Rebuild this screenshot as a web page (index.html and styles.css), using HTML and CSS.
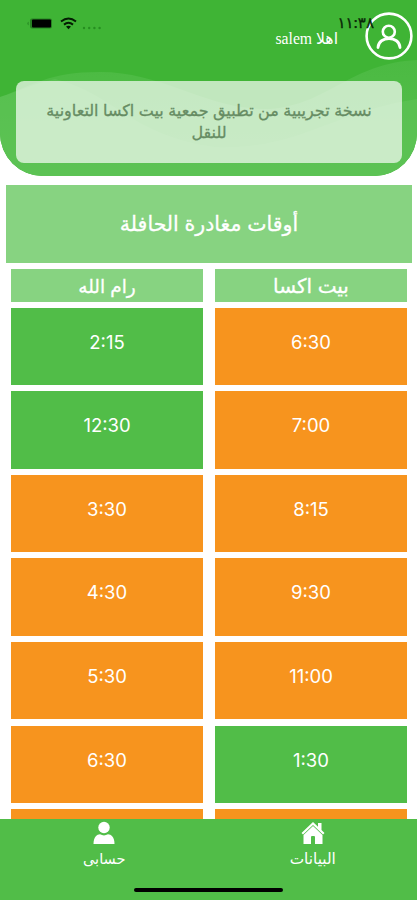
FILE: index.html
```html
<!DOCTYPE html>
<html lang="ar" dir="rtl">
<head>
<meta charset="utf-8">
<title>أوقات مغادرة الحافلة</title>
<link rel="stylesheet" href="styles.css">
</head>
<body>
<div class="app">
  <header class="header">
    <svg class="waves" viewBox="0 0 417 176" aria-hidden="true">
      <defs>
        <linearGradient id="g" x1="0" y1="0" x2="0" y2="1"><stop offset="0" stop-color="#4bba42"/><stop offset="1" stop-color="#58c04f"/></linearGradient>
      </defs>
      <path d="M0 97C32 86 48 72 100 72C165 72 205 110 270 109C330 104 350 63 417 60V176H0Z" fill="url(#g)"/>
      <path d="M0 97C20 91 32 84 55 79C115 94 130 135 215 147C300 150 330 112 417 99V176H0Z" fill="#61c55a" opacity=".55"/>
    </svg>
    <div class="topbar">
      <svg class="avatar" viewBox="0 0 48 48" fill="none" stroke="#fff" stroke-width="2.6"><circle cx="24" cy="24" r="22.4"/><circle cx="23.800" cy="19.700" r="6"/><path d="M13 35.500C13.500 23.500 34.500 23.500 35 35.500" stroke-linecap="round" stroke-width="2.800"/></svg>
      <div class="who"><span class="clock">١١:٣٨</span><span class="hello">اهلا salem</span></div>
      <svg class="status" viewBox="0 0 76 14"><rect x="3" y="1.500" width="22" height="10" rx="2" fill="#278122"/><rect x="5" y="2.500" width="19" height="8" rx="1" fill="#000"/><path d="M1.500 4.500Q-.5 6.500 1.500 8.500Z" fill="#238020"/><g fill="none" stroke="#041d03" stroke-width="2"><path d="M34 4.500Q41.500-1.500 49 4.500M37 7.600Q41.500 4 46 7.600"/></g><path d="M39 9.600Q41.500 8 44 9.600L41.500 12.200Z" fill="#041d03"/><g fill="#268f20"><circle cx="57" cy="11" r="1.200"/><circle cx="62.200" cy="11" r="1.200"/><circle cx="67.400" cy="11" r="1.200"/><circle cx="72.600" cy="11" r="1.200"/></g></svg>
    </div>
    <p class="notice">نسخة تجريبية من تطبيق جمعية بيت اكسا التعاونية<br>للنقل</p>
  </header>
  <main class="schedule">
    <h1 class="title">أوقات مغادرة الحافلة</h1>
    <div class="grid">
      <div class="place">بيت اكسا</div><div class="place place-narrow">رام الله</div>
      <div class="time">6:30</div><div class="time gone">2:15</div>
      <div class="time">7:00</div><div class="time gone">12:30</div>
      <div class="time">8:15</div><div class="time">3:30</div>
      <div class="time">9:30</div><div class="time">4:30</div>
      <div class="time">11:00</div><div class="time">5:30</div>
      <div class="time gone">1:30</div><div class="time">6:30</div>
      <div class="time"></div><div class="time"></div>
    </div>
  </main>
  <nav class="tabs">
    <div class="tab"><svg viewBox="0 0 24 24" fill="#fff"><path d="M12 1L.5 12L2 13.500L12 4L22 13.500L23.500 12L20.500 9V2H17V5.800Z"/><path d="M2.500 14L12 5L21.500 14V23H14V16Q14 15 13 15H11Q10 15 10 16V23H2.500Z"/></svg><span class="tab-wide">البيانات</span></div>
    <div class="tab"><svg viewBox="0 0 24 24" fill="#fff"><circle cx="12" cy="6.500" r="5.700"/><path d="M1.500 23C1.500 16 5 13.500 8 13.300Q12 15.500 16 13.300C19 13.500 22.500 16 22.500 23Z"/></svg><span>حسابى</span></div>
    <i class="home-bar"></i>
  </nav>
</div>
</body>
</html>
```
FILE: styles.css
```css
* { box-sizing: border-box; }
body { margin: 0; background: #fff; font-family: Inter, "DejaVu Sans", sans-serif; color: #fff; }
.app { height: 900px; display: flex; flex-direction: column; overflow: hidden; }
.header { position: relative; flex: none; height: 176px; background: #3fb435; border-radius: 0 0 43px 43px; overflow: hidden; }
.waves { position: absolute; inset: 0; width: 417px; height: 176px; }
.topbar { position: relative; display: flex; height: 81px; padding: 12px 4px 0 27px; }
.avatar { width: 48px; height: 48px; flex: none; }
.who { display: flex; flex-direction: column; width: 100px; }
.clock { color: #092707; font-size: 15px; line-height: 22px; margin-right: -9px; height: 17px; -webkit-text-stroke: .3px; }
.hello { font: 15.7px/20px "Liberation Serif", "DejaVu Sans", serif; margin-right: 27px; white-space: nowrap; }
.status { width: 76px; height: 14px; margin: 5px auto 0 0; }
.notice { position: relative; margin: 0 15px 0 16px; height: 82px; padding-top: 18px; border-radius: 8px; background: rgba(255,255,255,.68); color: #668c63; font-size: 16px; line-height: 22px; text-align: center; white-space: nowrap; -webkit-text-stroke: .3px; }
.schedule { flex: 1; min-height: 0; overflow: hidden; padding: 9px 5px 0 6px; }
.title { margin: 0 0 6.5px; height: 77.500px; background: #87d381; font-size: 20.5px; font-weight: 400; line-height: 78px; text-align: center; -webkit-text-stroke: .3px; }
.grid { display: grid; grid-template-columns: 1fr 1fr; column-gap: 12px; row-gap: 6.200px; padding: 0 5px; grid-template-rows: 32.500px; grid-auto-rows: 77.400px; }
.place { background: #87d381; font-size: 20px; line-height: 34px; text-align: center; -webkit-text-stroke: .3px; }
.place-narrow { font-size: 18.5px; }
.time { background: #f7941e; font-size: 18.500px; line-height: 68px; text-align: center; }
.gone { background: #51bd48; }
.tabs { position: relative; flex: none; height: 81px; display: flex; background: #51bd48; }
.tab { flex: 1; display: flex; flex-direction: column; align-items: center; padding-top: 2px; font-size: 14.5px; line-height: 22px; }
.tab svg { width: 24px; height: 24px; margin-bottom: 3px; }
.tab-wide { font-size: 15.3px; }
.home-bar { position: absolute; left: 134px; bottom: 8px; width: 149px; height: 4px; border-radius: 2px; background: #000; }
```
